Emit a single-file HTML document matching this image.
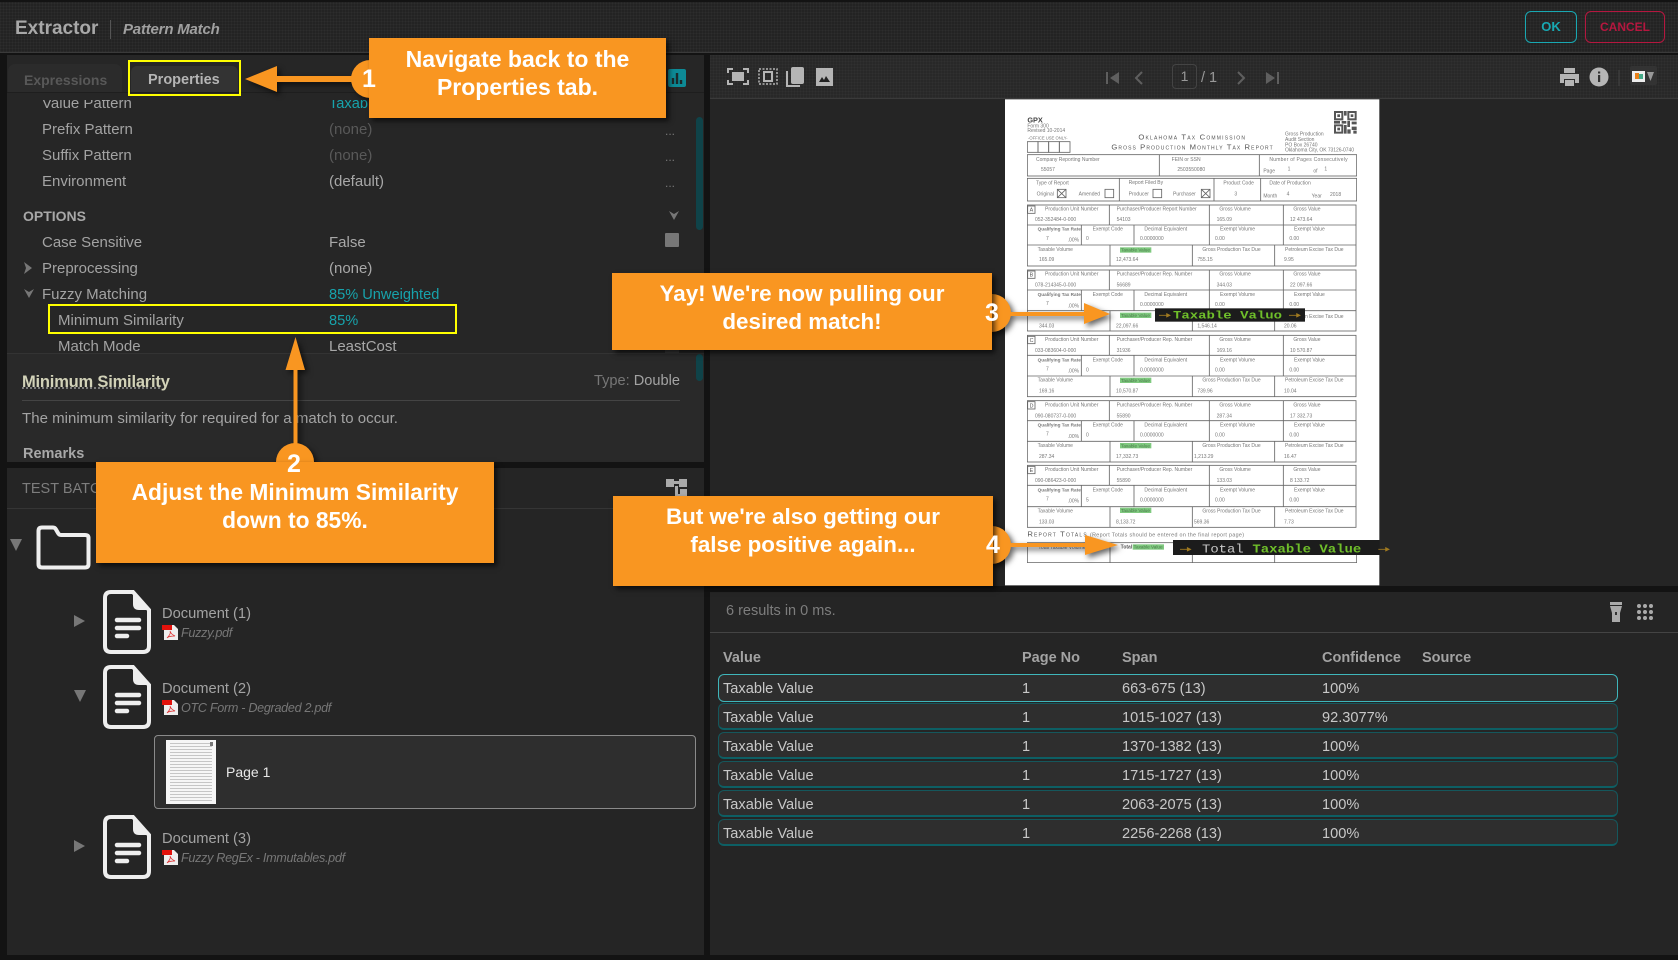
<!DOCTYPE html>
<html><head><meta charset="utf-8"><style>
html,body{margin:0;padding:0;width:1678px;height:960px;overflow:hidden;background:#131313}
body{position:relative;font-family:"Liberation Sans",sans-serif;font-size:15px;color:#a3a3a3}
.a{position:absolute}
.t{position:absolute;line-height:20px;white-space:nowrap;margin-top:1px}
.v{color:#a8a8a8}.n{color:#595959}.c{color:#17a3ac;font-size:14.6px}.b{font-weight:bold}
.d{color:#777;font-size:12px;margin-top:-1px}
.it{font-style:italic;font-size:12.6px;letter-spacing:-.3px;color:#777}
.call{position:absolute;background:#f99621;color:#fff;font-weight:bold;line-height:28px;text-align:center;box-shadow:3px 3px 5px rgba(0,0,0,.65);box-sizing:border-box}
.num{position:absolute;color:#fff;font-weight:bold;font-size:25px;line-height:30px;width:30px;text-align:center}
.row{position:absolute;left:718px;width:900px;height:27px;background:#2e2e2e;border-radius:6px;border:1px solid #15575c;border-bottom:2px solid #0d5f64;box-sizing:border-box}
.rt{position:absolute;line-height:20px;color:#c8c8c8;white-space:nowrap;font-size:14.6px;margin-top:1px}
</style></head><body>
<!-- header -->
<div class="a" style="left:0;top:2px;width:1678px;height:50px;background-color:#232323;background-image:repeating-linear-gradient(0deg,rgba(255,255,255,.025) 0 1px,transparent 1px 3px),repeating-linear-gradient(90deg,rgba(255,255,255,.025) 0 1px,transparent 1px 3px);border-bottom:1px solid #3a3a3a"></div>
<div class="t b" style="left:15px;top:18px;font-size:19px;color:#a8a8a8">Extractor</div>
<div class="a" style="left:110px;top:20px;width:1px;height:19px;background:#555"></div>
<div class="t" style="left:123px;top:19px;font-size:15px;font-style:italic;font-weight:bold;color:#a0a0a0;letter-spacing:-.2px">Pattern Match</div>
<div class="a" style="left:1525px;top:11px;width:52px;height:32px;box-sizing:border-box;border:1px solid #18a8b2;border-radius:6px;color:#18a8b2;font-size:13px;font-weight:bold;text-align:center;line-height:30px">OK</div>
<div class="a" style="left:1585px;top:11px;width:80px;height:32px;box-sizing:border-box;border:1px solid #b5173f;border-radius:6px;color:#b5173f;font-size:12px;font-weight:bold;text-align:center;line-height:30px">CANCEL</div>

<!-- left top panel -->
<div class="a" style="left:7px;top:55px;width:697px;height:407px;background:#262626"></div>
<div class="a" style="left:7px;top:92px;width:697px;height:1px;background:#1e1e1e"></div>
<div class="a" style="left:8px;top:64px;width:114px;height:28px;background:#2b2b2b;border-radius:7px 7px 0 0"></div>
<div class="a" style="left:131px;top:66px;width:107px;height:26px;background:#333;border-radius:6px 6px 0 0"></div>
<div class="t b" style="left:24px;top:69px;font-size:14px;color:#585858">Expressions</div>
<div class="t b" style="left:148px;top:69px;font-size:14.5px;color:#b5b5b5">Properties</div>
<svg class="a" style="left:668px;top:69px" width="18" height="18"><rect width="18" height="18" rx="2" fill="#0d8a96"/><path d="M5 15V9M9 15V4M13 15V11" stroke="#1b2a2c" stroke-width="2.4"/></svg>

<div class="t" style="left:42px;top:93px">Value Pattern</div>
<div class="t c" style="left:329px;top:93px">Taxable</div>
<div class="a" style="left:7px;top:93px;width:697px;height:7px;background:#262626"></div>
<div class="a" style="left:128px;top:60px;width:113px;height:36px;box-sizing:border-box;border:2px solid #ffff00"></div>
<div class="t" style="left:42px;top:119px">Prefix Pattern</div><div class="t n" style="left:329px;top:119px">(none)</div><div class="t d" style="left:665px;top:122px">...</div>
<div class="t" style="left:42px;top:145px">Suffix Pattern</div><div class="t n" style="left:329px;top:145px">(none)</div><div class="t d" style="left:665px;top:148px">...</div>
<div class="t" style="left:42px;top:171px">Environment</div><div class="t v" style="left:329px;top:171px">(default)</div><div class="t d" style="left:665px;top:174px">...</div>
<div class="t b" style="left:23px;top:205px;font-size:14px;color:#a8a8a8">OPTIONS</div>
<svg class="a" style="left:668px;top:210px" width="12" height="11"><path d="M1 1L6 10L11 1L6 4Z" fill="#777"/></svg>
<div class="t" style="left:42px;top:232px">Case Sensitive</div><div class="t v" style="left:329px;top:232px">False</div>
<div class="a" style="left:665px;top:233px;width:14px;height:14px;background:#777;border-radius:1px"></div>
<svg class="a" style="left:24px;top:262px" width="9" height="12"><path d="M0 0L8 6L0 12L2 6Z" fill="#777"/></svg>
<div class="t" style="left:42px;top:258px">Preprocessing</div><div class="t v" style="left:329px;top:258px">(none)</div>
<svg class="a" style="left:24px;top:289px" width="10" height="9"><path d="M0 0L5 9L10 0L5 3Z" fill="#777"/></svg>
<div class="t" style="left:42px;top:284px">Fuzzy Matching</div><div class="t c" style="left:329px;top:284px">85% Unweighted</div>
<div class="t" style="left:58px;top:310px">Minimum Similarity</div><div class="t c" style="left:329px;top:310px">85%</div>
<div class="t" style="left:58px;top:336px">Match Mode</div><div class="t v" style="left:329px;top:336px">LeastCost</div>
<div class="a" style="left:665px;top:344px;width:14px;height:9px;background:#3a3a3a"></div>
<div class="a" style="left:48px;top:304px;width:409px;height:30px;box-sizing:border-box;border:2px solid #ffff00"></div>
<div class="a" style="left:696px;top:117px;width:7px;height:113px;background:#0f4349;border-radius:4px"></div>
<div class="a" style="left:7px;top:353px;width:697px;height:109px;background:#292929;border-top:1px solid #333;box-sizing:border-box"></div>
<div class="a" style="left:696px;top:354px;width:7px;height:27px;background:#0f4349;border-radius:4px"></div>
<div class="t b" style="left:22px;top:371px;font-size:16.5px;letter-spacing:-.2px;color:#d2d2b8;text-decoration:underline dotted #888">Minimum Similarity</div>
<div class="t" style="left:594px;top:370px;color:#777;font-size:14.6px">Type: <span style="color:#a3a3a3">Double</span></div>
<div class="a" style="left:22px;top:400px;width:658px;height:1px;background:#444"></div>
<div class="t" style="left:22px;top:408px;letter-spacing:.03px">The minimum similarity for required for a match to occur.</div>
<div class="t b" style="left:23px;top:443px;font-size:14.5px;color:#a8a8a8">Remarks</div>

<!-- left bottom panel -->
<div class="a" style="left:7px;top:468px;width:697px;height:487px;background:#252525"></div>
<div class="a" style="left:7px;top:508px;width:697px;height:1px;background:#353535"></div>
<div class="t" style="left:22px;top:478px;color:#7d7d7d;font-size:14.5px">TEST BATCH</div>
<svg class="a" style="left:666px;top:479px" width="21" height="20" fill="#aaa"><rect x="0" y="0" width="8" height="8"/><rect x="8" y="2" width="6" height="3"/><rect x="13" y="0" width="8" height="8"/><rect x="9" y="7" width="3" height="12"/><rect x="10" y="15" width="6" height="2"/><rect x="14" y="10" width="7" height="10"/></svg>
<svg class="a" style="left:10px;top:539px" width="12" height="12"><path d="M0 0H12L6 12Z" fill="#777"/></svg>
<svg class="a" style="left:36px;top:525px" width="56" height="45"><path d="M2.500 6Q2.500 2.500 6 2.500H17Q19 2.500 20 4.500L22 8Q23 10 25 10H49Q52.500 10 52.500 13V39Q52.500 42.500 49 42.500H6Q2.500 42.500 2.500 39Z" fill="none" stroke="#eee" stroke-width="4"/></svg>
<svg class="a" style="left:74px;top:615px" width="11" height="12"><path d="M0 0L11 6L0 12Z" fill="#777"/></svg>
<svg class="a" style="left:74px;top:690px" width="12" height="12"><path d="M0 0H12L6 12Z" fill="#777"/></svg>
<svg class="a" style="left:74px;top:840px" width="11" height="12"><path d="M0 0L11 6L0 12Z" fill="#777"/></svg>
<svg class="a" style="left:103px;top:590px" width="48" height="64"><path d="M2 8Q2 2 8 2H30L46 20V56Q46 62 40 62H8Q2 62 2 56Z" fill="none" stroke="#eee" stroke-width="4"/><path d="M30 2V14Q30 20 36 20H46Z" fill="#eee"/><path d="M14 30H36M14 38H36M14 46H24" stroke="#eee" stroke-width="4.500" stroke-linecap="round"/></svg>
<svg class="a" style="left:103px;top:665px" width="48" height="64"><path d="M2 8Q2 2 8 2H30L46 20V56Q46 62 40 62H8Q2 62 2 56Z" fill="none" stroke="#eee" stroke-width="4"/><path d="M30 2V14Q30 20 36 20H46Z" fill="#eee"/><path d="M14 30H36M14 38H36M14 46H24" stroke="#eee" stroke-width="4.500" stroke-linecap="round"/></svg>
<svg class="a" style="left:103px;top:815px" width="48" height="64"><path d="M2 8Q2 2 8 2H30L46 20V56Q46 62 40 62H8Q2 62 2 56Z" fill="none" stroke="#eee" stroke-width="4"/><path d="M30 2V14Q30 20 36 20H46Z" fill="#eee"/><path d="M14 30H36M14 38H36M14 46H24" stroke="#eee" stroke-width="4.500" stroke-linecap="round"/></svg>
<div class="t" style="left:162px;top:603px;font-size:14.7px">Document (1)</div>
<div class="t it" style="left:181px;top:622px">Fuzzy.pdf</div>
<div class="t" style="left:162px;top:678px;font-size:14.7px">Document (2)</div>
<div class="t it" style="left:181px;top:697px">OTC Form - Degraded 2.pdf</div>
<div class="t" style="left:162px;top:828px;font-size:14.7px">Document (3)</div>
<div class="t it" style="left:181px;top:847px">Fuzzy RegEx - Immutables.pdf</div>
<svg class="a" style="left:162px;top:625px" width="17" height="15"><path d="M2 0H12L16 4V15H2Z" fill="#eee"/><rect width="10" height="5" fill="#e2120c"/><path d="M5 13C7 11 9 8 8 6C9 9 11 10 13 11C10 11 7 11 5 13Z" fill="none" stroke="#d33" stroke-width=".8"/></svg>
<svg class="a" style="left:162px;top:700px" width="17" height="15"><path d="M2 0H12L16 4V15H2Z" fill="#eee"/><rect width="10" height="5" fill="#e2120c"/><path d="M5 13C7 11 9 8 8 6C9 9 11 10 13 11C10 11 7 11 5 13Z" fill="none" stroke="#d33" stroke-width=".8"/></svg>
<svg class="a" style="left:162px;top:850px" width="17" height="15"><path d="M2 0H12L16 4V15H2Z" fill="#eee"/><rect width="10" height="5" fill="#e2120c"/><path d="M5 13C7 11 9 8 8 6C9 9 11 10 13 11C10 11 7 11 5 13Z" fill="none" stroke="#d33" stroke-width=".8"/></svg>
<div class="a" style="left:154px;top:735px;width:542px;height:74px;box-sizing:border-box;background:#2e2e2e;border:1px solid #8a8a8a;border-radius:4px"></div>
<div class="a" style="left:166px;top:740px;width:50px;height:64px;background-color:#f6f6f6;background-image:repeating-linear-gradient(0deg,#c6c6c6 0 1px,transparent 1px 3px);background-size:42px 58px;background-position:4px 3px;background-repeat:no-repeat"></div>
<div class="a" style="left:210px;top:742px;width:3px;height:4px;background:#777"></div>
<div class="t" style="left:226px;top:761px;color:#e8e8e8;font-size:14px">Page 1</div>

<!-- right viewer -->
<div class="a" style="left:710px;top:55px;width:968px;height:531px;background:#252525"></div>
<div class="a" style="left:710px;top:55px;width:968px;height:43px;background-color:#282828;background-image:repeating-linear-gradient(0deg,rgba(255,255,255,.018) 0 1px,transparent 1px 3px),repeating-linear-gradient(90deg,rgba(255,255,255,.018) 0 1px,transparent 1px 3px);border-bottom:1px solid #3a3a3a"></div>
<svg class="a" style="left:726px;top:66px" width="112" height="22" fill="#b5b5b5">
<path d="M2 7V3H7M17 3H22V7M22 14V18H17M7 18H2V14" stroke="#b5b5b5" stroke-width="2" fill="none"/><rect x="6" y="6" width="12" height="9"/>
<rect x="33" y="3" width="18" height="15" fill="none" stroke="#b5b5b5" stroke-dasharray="2 1.500" stroke-width="1.500"/><rect x="38" y="6" width="8" height="9" fill="none" stroke="#b5b5b5" stroke-width="2"/>
<rect x="65" y="1" width="13" height="17" rx="2"/><path d="M61 5V20H74" stroke="#b5b5b5" stroke-width="2" fill="none"/>
<path d="M90 2H107V20H90Z"/><path d="M93 16L96 11L98 14L100 10L104 16Z" fill="#222"/></svg>
<svg class="a" style="left:1106px;top:70px" width="176" height="18" fill="#5f5f5f" stroke="none">
<rect y="2" width="2" height="12"/><path d="M13 2V14L4 8Z"/>
<path d="M36 2L30 8L36 14" stroke="#5f5f5f" stroke-width="2" fill="none"/>
<path d="M132 2L138 8L132 14" stroke="#5f5f5f" stroke-width="2" fill="none"/>
<path d="M160 2V14L169 8Z"/><rect x="171" y="2" width="2" height="12"/></svg>
<div class="a" style="left:1172px;top:64px;width:25px;height:25px;box-sizing:border-box;border:1px solid #444;border-radius:4px;text-align:center;line-height:23px;font-size:14px;color:#999">1</div>
<div class="t" style="left:1201px;top:67px;color:#999;font-size:14.5px">/ 1</div>
<svg class="a" style="left:1559px;top:66px" width="100" height="22" fill="#b5b5b5">
<rect x="5" y="2" width="11" height="5"/><path d="M1 8H20V17H16V13H5V17H1Z"/><rect x="6" y="14" width="9" height="6"/>
<circle cx="40" cy="11" r="9.500"/><rect x="39" y="9" width="2.200" height="7" fill="#333"/><rect x="39" y="5.500" width="2.200" height="2" fill="#333"/>
<rect x="59.500" y="4" width="1" height="16" fill="#444"/>
<rect x="71" y="0" width="27" height="19" rx="2" fill="#333"/><rect x="73" y="5" width="13" height="11" fill="#eee"/><rect x="76" y="7" width="4" height="6" fill="#e8801a"/><rect x="80" y="8" width="4" height="5" fill="#4a8"/><path d="M88 6H95L91.500 15Z" fill="#999"/></svg>

<!-- document page -->
<svg class="a" style="left:990px;top:90px" width="688" height="500" viewBox="0 0 2064 1500" font-family="Liberation Sans" fill="#777">
<defs><filter id="bl" x="0" y="0" width="100%" height="100%"><feGaussianBlur stdDeviation="1.100"/></filter></defs>
<rect x="45" y="28" width="1123" height="1458" fill="#fff"/>
<g filter="url(#bl)" font-size="15">
<text x="112" y="98" font-size="22" font-weight="bold" fill="#444">GPX</text><text x="112" y="112">Form 300</text><text x="112" y="126">Revised 10-2014</text><text x="114" y="149" font-size="12.500">-OFFICE USE ONLY-</text>
<g fill="none" stroke="#666" stroke-width="2.500"><rect x="112" y="155" width="32" height="32"/><rect x="144" y="155" width="32" height="32"/><rect x="176" y="155" width="32" height="32"/><rect x="208" y="155" width="32" height="32"/>
<rect x="112" y="194" width="988" height="64"/><path d="M508 194V258M808 194V258"/><rect x="112" y="265" width="988" height="68"/><path d="M388 265V333M672 265V333M812 265V333"/></g>
<text x="445" y="149" font-size="23" style="font-variant:small-caps" fill="#555" textLength="320" lengthAdjust="spacing">Oklahoma Tax Commission</text>
<text x="364" y="179" font-size="23" style="font-variant:small-caps" fill="#555" textLength="484" lengthAdjust="spacing">Gross Production Monthly Tax Report</text>
<text x="885" y="137">Gross Production</text><text x="885" y="153">Audit Section</text><text x="885" y="169">PO Box 26740</text><text x="885" y="185" textLength="207">Oklahoma City, OK 73126-0740</text>
<g fill="#555"><path d="M1032 63h28v28h-28zM1072 63h28v28h-28zM1032 103h28v28h-28z"/><path d="M1062 63h8v14h-8zM1032 93h18v8h-18zM1055 93h14v8h-14zM1072 93h8v18h-8zM1085 95h15v8h-15zM1062 105h8v26h-8zM1085 110h15v10h-15zM1072 118h10v13h-10zM1090 122h10v9h-10z"/></g><g fill="#fff"><rect x="1038" y="69" width="16" height="16"/><rect x="1078" y="69" width="16" height="16"/><rect x="1038" y="109" width="16" height="16"/></g><g fill="#555"><rect x="1042" y="73" width="8" height="8"/><rect x="1082" y="73" width="8" height="8"/><rect x="1042" y="113" width="8" height="8"/></g>
<text x="138" y="213">Company Reporting Number</text><text x="545" y="213">FEIN or SSN</text><text x="838" y="213" textLength="235">Number of Pages Consecutively</text>
<text x="153" y="243">55057</text><text x="562" y="243">2503550080</text><text x="820" y="247">Page</text><text x="893" y="242">1</text><text x="970" y="247">of</text><text x="1003" y="242">1</text>
<text x="138" y="283">Type of Report</text><text x="416" y="282">Report Filed By</text><text x="700" y="284">Product Code</text><text x="838" y="284">Date of Production</text>
<text x="140" y="316">Original</text><text x="266" y="316">Amended</text><text x="416" y="316">Producer</text><text x="549" y="316">Purchaser</text><text x="733" y="317">3</text><text x="820" y="322">Month</text><text x="890" y="316">4</text><text x="965" y="322">Year</text><text x="1020" y="318">2018</text>
<g fill="none" stroke="#666" stroke-width="2.500"><rect x="202" y="298" width="26" height="25"/><path d="M202 298L228 323M228 298L202 323"/><rect x="345" y="298" width="26" height="25"/><rect x="489" y="298" width="26" height="25"/><rect x="634" y="298" width="26" height="25"/><path d="M634 298L660 323M660 298L634 323"/></g>

<g transform="translate(0,345)"><g fill="none" stroke="#666" stroke-width="2.500"><rect x="112" y="0" width="986" height="183"/><path d="M112 60H1098M112 120H1098M358 0V60M658 0V60M880 0V60M274 60V120M432 60V120M658 60V120M880 60V120M360 120V183M607 120V183M854 120V183"/><rect x="113" y="3" width="22" height="22"/></g><text x="119" y="20" font-size="16" fill="#555">A</text><text x="165" y="17">Production Unit Number</text><text x="380" y="17">Purchaser/Producer Report Number</text><text x="688" y="17">Gross Volume</text><text x="910" y="17">Gross Value</text><text x="135" y="48">052-352484-0-000</text><text x="380" y="48">54103</text><text x="680" y="48">165.09</text><text x="900" y="48">12 473.64</text><text x="143" y="77" font-weight="bold" font-size="14">Qualifying Tax Rate</text><text x="308" y="77">Exempt Code</text><text x="463" y="77">Decimal Equivalent</text><text x="690" y="77">Exempt Volume</text><text x="912" y="77">Exempt Value</text><text x="168" y="105">7</text><text x="233" y="110">.00%</text><text x="288" y="105">0</text><text x="450" y="105">0.0000000</text><text x="675" y="105">0.00</text><text x="898" y="105">0.00</text><text x="143" y="138">Taxable Volume</text><rect x="390" y="127" width="94" height="16" fill="#7fc97f"/><text x="393" y="140" fill="#4a7a4a" font-size="14">Taxable Value</text><text x="637" y="138">Gross Production Tax Due</text><text x="885" y="138">Petroleum Excise Tax Due</text><text x="147" y="168">165.09</text><text x="378" y="168">12,473.64</text><text x="622" y="168">755.15</text><text x="882" y="168">9.95</text></g>

<g transform="translate(0,540)"><g fill="none" stroke="#666" stroke-width="2.500"><rect x="112" y="0" width="986" height="183"/><path d="M112 60H1098M112 122H1098M358 0V60M658 0V60M880 0V60M274 60V122M432 60V122M658 60V122M880 60V122M360 122V183M607 122V183M854 122V183"/><rect x="113" y="3" width="22" height="22"/></g><text x="119" y="20" font-size="16" fill="#555">B</text><text x="165" y="17">Production Unit Number</text><text x="380" y="17">Purchaser/Producer Rep. Number</text><text x="688" y="17">Gross Volume</text><text x="910" y="17">Gross Value</text><text x="135" y="50">078-214345-0-000</text><text x="380" y="50">56689</text><text x="680" y="50">344.03</text><text x="900" y="50">22 097.66</text><text x="143" y="78" font-weight="bold" font-size="14">Qualifying Tax Rate</text><text x="308" y="78">Exempt Code</text><text x="463" y="78">Decimal Equivalent</text><text x="690" y="78">Exempt Volume</text><text x="912" y="78">Exempt Value</text><text x="168" y="105">7</text><text x="233" y="112">.00%</text><text x="450" y="108">0.0000000</text><text x="675" y="108">0.00</text><text x="898" y="108">0.00</text><rect x="390" y="128" width="94" height="16" fill="#7fc97f"/><text x="393" y="141" fill="#4a7a4a" font-size="14">Taxable Value</text><text x="885" y="144">Petroleum Excise Tax Due</text><text x="147" y="172">344.03</text><text x="378" y="172">22,097.66</text><text x="622" y="172">1,546.14</text><text x="882" y="172">20.06</text></g>

<g transform="translate(0,736)"><g fill="none" stroke="#666" stroke-width="2.500"><rect x="112" y="0" width="986" height="184"/><path d="M112 60H1098M112 122H1098M358 0V60M658 0V60M880 0V60M274 60V122M432 60V122M658 60V122M880 60V122M360 122V184M607 122V184M854 122V184"/><rect x="113" y="3" width="22" height="22"/></g><text x="119" y="20" font-size="16" fill="#555">C</text><text x="165" y="17">Production Unit Number</text><text x="380" y="17">Purchaser/Producer Rep. Number</text><text x="688" y="17">Gross Volume</text><text x="910" y="17">Gross Value</text><text x="135" y="50">033-083604-0-000</text><text x="380" y="50">31936</text><text x="680" y="50">169.16</text><text x="900" y="50">10 570.87</text><text x="143" y="78" font-weight="bold" font-size="14">Qualifying Tax Rate</text><text x="308" y="78">Exempt Code</text><text x="463" y="78">Decimal Equivalent</text><text x="690" y="78">Exempt Volume</text><text x="912" y="78">Exempt Value</text><text x="168" y="105">7</text><text x="233" y="112">.00%</text><text x="288" y="108">0</text><text x="450" y="108">0.0000000</text><text x="675" y="108">0.00</text><text x="898" y="108">0.00</text><text x="143" y="139">Taxable Volume</text><rect x="390" y="127" width="94" height="16" fill="#7fc97f"/><text x="393" y="140" fill="#4a7a4a" font-size="14">Taxable Value</text><text x="637" y="139">Gross Production Tax Due</text><text x="885" y="139">Petroleum Excise Tax Due</text><text x="147" y="172">169.16</text><text x="378" y="172">10,570.87</text><text x="622" y="172">739.96</text><text x="882" y="172">10.04</text></g>

<g transform="translate(0,932)"><g fill="none" stroke="#666" stroke-width="2.500"><rect x="112" y="0" width="986" height="184"/><path d="M112 60H1098M112 122H1098M358 0V60M658 0V60M880 0V60M274 60V122M432 60V122M658 60V122M880 60V122M360 122V184M607 122V184M854 122V184"/><rect x="113" y="3" width="22" height="22"/></g><text x="119" y="20" font-size="16" fill="#555">D</text><text x="165" y="17">Production Unit Number</text><text x="380" y="17">Purchaser/Producer Rep. Number</text><text x="688" y="17">Gross Volume</text><text x="910" y="17">Gross Value</text><text x="135" y="50">090-080737-0-000</text><text x="380" y="50">55890</text><text x="680" y="50">287.34</text><text x="900" y="50">17 332.73</text><text x="143" y="78" font-weight="bold" font-size="14">Qualifying Tax Rate</text><text x="308" y="78">Exempt Code</text><text x="463" y="78">Decimal Equivalent</text><text x="690" y="78">Exempt Volume</text><text x="912" y="78">Exempt Value</text><text x="168" y="105">7</text><text x="233" y="112">.00%</text><text x="288" y="108">0</text><text x="450" y="108">0.0000000</text><text x="675" y="108">0.00</text><text x="898" y="108">0.00</text><text x="143" y="139">Taxable Volume</text><rect x="390" y="127" width="94" height="16" fill="#7fc97f"/><text x="393" y="140" fill="#4a7a4a" font-size="14">Taxable Value</text><text x="637" y="139">Gross Production Tax Due</text><text x="885" y="139">Petroleum Excise Tax Due</text><text x="147" y="172">287.34</text><text x="378" y="172">17,332.73</text><text x="612" y="172">1,213.29</text><text x="882" y="172">16.47</text></g>

<g transform="translate(0,1126)"><g fill="none" stroke="#666" stroke-width="2.500"><rect x="112" y="0" width="986" height="186"/><path d="M112 60H1098M112 124H1098M358 0V60M658 0V60M880 0V60M274 60V124M432 60V124M658 60V124M880 60V124M360 124V186M607 124V186M854 124V186"/><rect x="113" y="3" width="22" height="22"/></g><text x="119" y="20" font-size="16" fill="#555">E</text><text x="165" y="17">Production Unit Number</text><text x="380" y="17">Purchaser/Producer Rep. Number</text><text x="688" y="17">Gross Volume</text><text x="910" y="17">Gross Value</text><text x="135" y="50">090-086423-0-000</text><text x="380" y="50">55890</text><text x="680" y="50">133.03</text><text x="900" y="50">8 133.72</text><text x="143" y="78" font-weight="bold" font-size="14">Qualifying Tax Rate</text><text x="308" y="78">Exempt Code</text><text x="463" y="78">Decimal Equivalent</text><text x="690" y="78">Exempt Volume</text><text x="912" y="78">Exempt Value</text><text x="168" y="105">7</text><text x="233" y="112">.00%</text><text x="288" y="108">5</text><text x="450" y="108">0.0000000</text><text x="675" y="108">0.00</text><text x="898" y="108">0.00</text><text x="143" y="141">Taxable Volume</text><rect x="390" y="127" width="94" height="16" fill="#7fc97f"/><text x="393" y="140" fill="#4a7a4a" font-size="14">Taxable Value</text><text x="637" y="141">Gross Production Tax Due</text><text x="885" y="141">Petroleum Excise Tax Due</text><text x="147" y="174">133.03</text><text x="378" y="174">8,133.72</text><text x="612" y="174">569.36</text><text x="882" y="174">7.73</text></g>

<text x="112" y="1340" font-size="23" style="font-variant:small-caps" fill="#555" textLength="178" lengthAdjust="spacing">Report Totals</text><text x="300" y="1339" font-size="16" textLength="462">(Report Totals should be entered on the final report page)</text>
<g fill="none" stroke="#666" stroke-width="2.500"><rect x="112" y="1358" width="988" height="60"/><path d="M360 1358V1418M607 1358V1418M854 1358V1418"/></g>
<text x="145" y="1377">Total Taxable Volume</text><text x="392" y="1375" font-weight="bold" fill="#555">Total</text><rect x="428" y="1363" width="94" height="16" fill="#7fc97f"/><text x="431" y="1376" fill="#4a7a4a" font-size="14">Taxable Value</text>
</g>
<rect x="495" y="655" width="450" height="40" fill="#1c1c1c"/>
<path d="M507 676H530M530 671L540 676L530 681Z" stroke="#a07a20" stroke-width="2.500" fill="#a07a20"/>
<text x="549" y="686" font-family="Liberation Mono" font-size="34" font-weight="bold" fill="#6fbf2a" textLength="327" lengthAdjust="spacingAndGlyphs">Taxable Valuo</text>
<path d="M897 676H920M920 671L930 676L920 681Z" stroke="#a07a20" stroke-width="2.500" fill="#a07a20"/>
<rect x="549" y="1350" width="620" height="45" fill="#1c1c1c"/>
<rect x="1168" y="1350" width="40" height="45" fill="#1c1c1c" opacity="0"/>
<path d="M570 1378H592M592 1373L602 1378L592 1383Z" stroke="#a07a20" stroke-width="2.500" fill="#a07a20"/>
<text x="636" y="1388" font-family="Liberation Mono" font-size="36" fill="#c8c8c8" textLength="125" lengthAdjust="spacingAndGlyphs">Total</text>
<text x="787" y="1388" font-family="Liberation Mono" font-size="36" font-weight="bold" fill="#6fbf2a" textLength="327" lengthAdjust="spacingAndGlyphs">Taxable Value</text>
<path d="M1165 1378H1187M1187 1373L1197 1378L1187 1383Z" stroke="#a07a20" stroke-width="2.500" fill="#a07a20"/>
</svg>

<!-- results -->
<div class="a" style="left:710px;top:592px;width:968px;height:363px;background:#252525"></div>
<div class="a" style="left:710px;top:632px;width:968px;height:1px;background:#444"></div>
<div class="t" style="left:726px;top:600px;color:#7d7d7d;font-size:14.5px">6 results in 0 ms.</div>
<svg class="a" style="left:1608px;top:601px" width="50" height="22" fill="#aaa"><rect x="2" y="1" width="12" height="3"/><path d="M2 5H14L12 12V21H4V12Z"/><rect x="7" y="11" width="2" height="3" fill="#333"/>
<g><circle cx="31" cy="5" r="2"/><circle cx="37" cy="5" r="2"/><circle cx="43" cy="5" r="2"/><circle cx="31" cy="11" r="2"/><circle cx="37" cy="11" r="2"/><circle cx="43" cy="11" r="2"/><circle cx="31" cy="17" r="2"/><circle cx="37" cy="17" r="2"/><circle cx="43" cy="17" r="2"/></g></svg>
<div class="t b" style="left:723px;top:647px;font-size:14.5px;color:#a3a3a3">Value</div>
<div class="t b" style="left:1022px;top:647px;font-size:14.5px;color:#a3a3a3">Page No</div>
<div class="t b" style="left:1122px;top:647px;font-size:14.5px;color:#a3a3a3">Span</div>
<div class="t b" style="left:1322px;top:647px;font-size:14.5px;color:#a3a3a3">Confidence</div>
<div class="t b" style="left:1422px;top:647px;font-size:14.5px;color:#a3a3a3">Source</div>

<div class="row" style="top:674px;height:28px;border:1px solid #3fb6bb"></div>
<div class="row" style="top:703px"></div><div class="row" style="top:732px"></div><div class="row" style="top:761px"></div><div class="row" style="top:790px"></div><div class="row" style="top:819px"></div>
<div class="rt" style="left:723px;top:678px">Taxable Value</div><div class="rt" style="left:1022px;top:678px">1</div><div class="rt" style="left:1122px;top:678px">663-675 (13)</div><div class="rt" style="left:1322px;top:678px">100%</div>
<div class="rt" style="left:723px;top:707px">Taxable Value</div><div class="rt" style="left:1022px;top:707px">1</div><div class="rt" style="left:1122px;top:707px">1015-1027 (13)</div><div class="rt" style="left:1322px;top:707px">92.3077%</div>
<div class="rt" style="left:723px;top:736px">Taxable Value</div><div class="rt" style="left:1022px;top:736px">1</div><div class="rt" style="left:1122px;top:736px">1370-1382 (13)</div><div class="rt" style="left:1322px;top:736px">100%</div>
<div class="rt" style="left:723px;top:765px">Taxable Value</div><div class="rt" style="left:1022px;top:765px">1</div><div class="rt" style="left:1122px;top:765px">1715-1727 (13)</div><div class="rt" style="left:1322px;top:765px">100%</div>
<div class="rt" style="left:723px;top:794px">Taxable Value</div><div class="rt" style="left:1022px;top:794px">1</div><div class="rt" style="left:1122px;top:794px">2063-2075 (13)</div><div class="rt" style="left:1322px;top:794px">100%</div>
<div class="rt" style="left:723px;top:823px">Taxable Value</div><div class="rt" style="left:1022px;top:823px">1</div><div class="rt" style="left:1122px;top:823px">2256-2268 (13)</div><div class="rt" style="left:1322px;top:823px">100%</div>

<!-- annotation arrows -->
<svg class="a" style="left:0;top:0;filter:drop-shadow(3px 3px 3px rgba(0,0,0,.6))" width="1678" height="960" fill="#f99621">
<path d="M245 79L277 66V76H360V82H277V92Z"/><circle cx="370" cy="79" r="19"/>
<path d="M295.500 337L305 370H297.500V450H293.500V370H285.500Z"/><circle cx="295" cy="462" r="19"/>
<path d="M1110 314L1084 303V312H1005V316H1084V324Z"/><circle cx="992" cy="313" r="19"/>
<path d="M1118 545L1085 535V543H1005V547H1085V555Z"/><circle cx="992" cy="545" r="19"/>
</svg>
<div class="call" style="left:369px;top:38px;width:297px;height:80px;padding-top:7px;font-size:23px">Navigate back to the<br>Properties tab.</div>
<div class="call" style="left:96px;top:462px;width:398px;height:101px;padding-top:16px;font-size:22.8px">Adjust the Minimum Similarity<br>down to 85%.</div>
<div class="call" style="left:612px;top:273px;width:380px;height:77px;padding-top:7px;font-size:22.4px">Yay! We're now pulling our<br>desired match!</div>
<div class="call" style="left:613px;top:496px;width:380px;height:90px;padding-top:7px;font-size:22.4px">But we're also getting our<br>false positive again...</div>
<div class="num" style="left:354px;top:64px">1</div>
<div class="num" style="left:279px;top:449px">2</div>
<div class="num" style="left:977px;top:298px">3</div>
<div class="num" style="left:978px;top:530px">4</div>
</body></html>
